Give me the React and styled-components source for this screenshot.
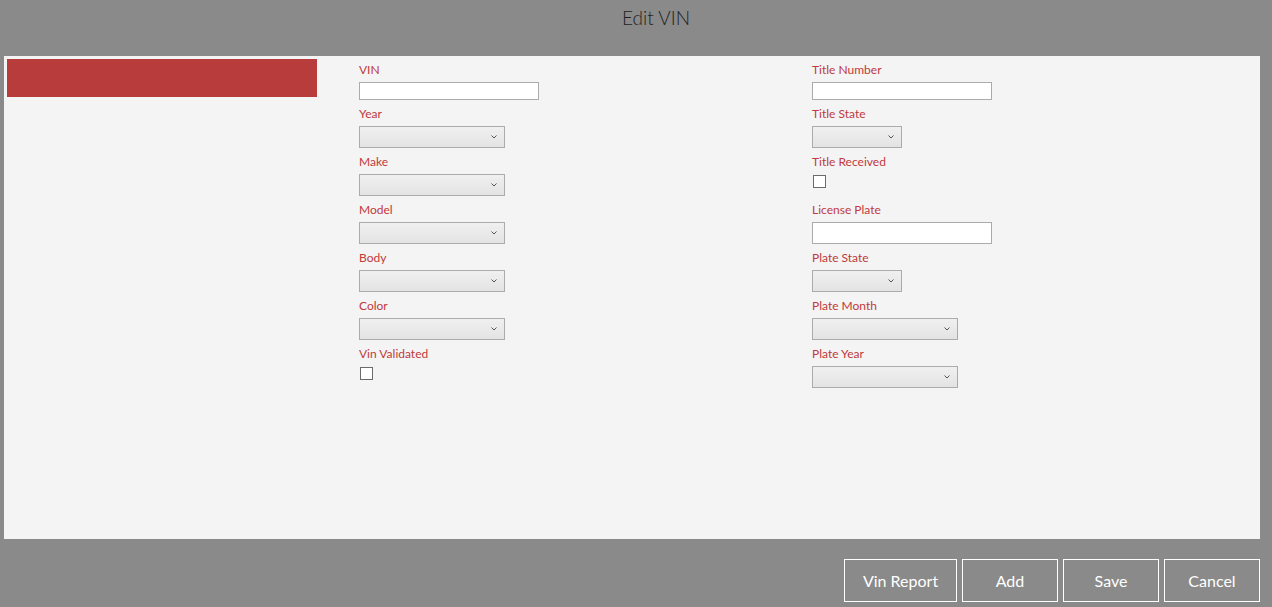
import styled, {createGlobalStyle} from 'styled-components'

const GlobalStyle = createGlobalStyle`
html, body {
margin: 0;
padding: 0;
background: #8a8a8a;
font-family: "Segoe UI", Lato, "Noto Sans", sans-serif;
}
`

const Page = styled.div`
width: 1272px;
height: 607px;
display: flex;
flex-direction: column;
`

const Header = styled.h1`
height: 56px;
margin: 0;
padding-left: 40px;
font-size: 19px;
font-weight: 300;
color: #1f1f1f;
text-align: center;
line-height: 36px;
`

const Panel = styled.div`
margin: 0 12px 0 4px;
height: 483px;
background: #f4f4f4;
display: grid;
grid-template-columns: 355px 453px 1fr;
box-sizing: border-box;
padding-top: 3px;
`

const SideBar = styled.div`
padding-left: 3px;
`

const RedBar = styled.div`
width: 310px;
height: 38px;
background: #b83c3c;
`

const Column = styled.div`
display: flex;
flex-direction: column;
gap: 4px;
padding-top: 1px;
`

const Label = styled.label`
display: block;
height: 18px;
line-height: 20px;
font-size: 12px;
color: #c0393b;
`

const TextInput = styled.input`
box-sizing: border-box;
width: 180px;
height: ${(props) => props.$h || 18}px;
margin: 0;
border: 1px solid #ababab;
background: #fff;
padding: 0 4px;
outline: none;
display: block;
`

const SelectWrap = styled.div`
position: relative;
width: ${(props) => props.$w || 146}px;
height: 22px;
`

const Select = styled.select`
appearance: none;
-webkit-appearance: none;
box-sizing: border-box;
width: 100%;
height: 22px;
margin: 0;
border: 1px solid #ababab;
border-radius: 0;
background: linear-gradient(#f0f0f0, #e3e3e3);
display: block;
`

const Chevron = styled.svg`
position: absolute;
right: 8px;
top: 9px;
pointer-events: none;
`

const CheckRow = styled.div`
height: 22px;
padding-left: 1px;
padding-top: 1px;
box-sizing: border-box;
`

const CheckBox = styled.div`
width: 13px;
height: 13px;
box-sizing: border-box;
border: 1px solid #6b6b6b;
background: #fff;
`

const Footer = styled.div`
display: flex;
justify-content: flex-end;
gap: 5px;
padding: 20px 12px 0 0;
`

const Button = styled.button`
width: ${(props) => props.$w || 96}px;
height: 43px;
box-sizing: border-box;
border: 1px solid #fff;
background: transparent;
color: #fff;
font-family: inherit;
font-size: 16px;
cursor: pointer;
`

const DropDown = ({w}) => (
    <SelectWrap $w={w}>
        <Select />
        <Chevron width="6" height="4" viewBox="0 0 6 4">
            <path d="M0.5 0.5 L3 3 L5.5 0.5" fill="none" stroke="#555" strokeWidth="1" />
        </Chevron>
    </SelectWrap>
)

const Field = ({label, children}) => (
    <div>
        <Label>{label}</Label>
        <div style={{marginTop: 4}}>{children}</div>
    </div>
)

const App = () => {
    return (
        <Page>
            <GlobalStyle />
            <Header>Edit VIN</Header>
            <Panel>
                <SideBar><RedBar /></SideBar>
                <Column>
                    <Field label="VIN"><TextInput /></Field>
                    <Field label="Year"><DropDown /></Field>
                    <Field label="Make"><DropDown /></Field>
                    <Field label="Model"><DropDown /></Field>
                    <Field label="Body"><DropDown /></Field>
                    <Field label="Color"><DropDown /></Field>
                    <Field label="Vin Validated"><CheckRow><CheckBox /></CheckRow></Field>
                </Column>
                <Column>
                    <Field label="Title Number"><TextInput /></Field>
                    <Field label="Title State"><DropDown w={90} /></Field>
                    <Field label="Title Received"><CheckRow><CheckBox /></CheckRow></Field>
                    <Field label="License Plate"><TextInput $h={22} /></Field>
                    <Field label="Plate State"><DropDown w={90} /></Field>
                    <Field label="Plate Month"><DropDown /></Field>
                    <Field label="Plate Year"><DropDown /></Field>
                </Column>
            </Panel>
            <Footer>
                <Button $w={113}>Vin Report</Button>
                <Button>Add</Button>
                <Button>Save</Button>
                <Button>Cancel</Button>
            </Footer>
        </Page>
    )
}

export default App
